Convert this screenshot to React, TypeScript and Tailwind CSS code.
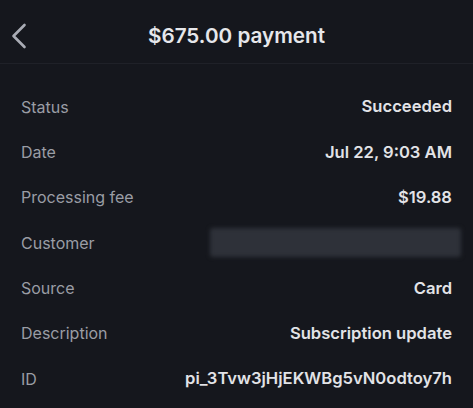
const rows: { label: string; value?: string }[] = [
  { label: 'Status', value: 'Succeeded' },
  { label: 'Date', value: 'Jul 22, 9:03 AM' },
  { label: 'Processing fee', value: '$19.88' },
  { label: 'Customer' },
  { label: 'Source', value: 'Card' },
  { label: 'Description', value: 'Subscription update' },
  { label: 'ID', value: 'pi_3Tvw3jHjEKWBg5vN0odtoy7h' },
]

export default function App() {
  return (
    <div className="w-[473px] h-[408px] overflow-hidden bg-[#15171d] font-['Inter',sans-serif]">
      {/* Header */}
      <div className="relative h-[64px] flex items-center justify-center border-b border-[#1f2128]">
        <button className="absolute left-[10px] top-[22px] w-[20px] h-[28px] flex items-center justify-center">
          <svg viewBox="0 0 20 28" className="w-[20px] h-[28px]" fill="none" stroke="#a9acb5" strokeWidth="2.6" strokeLinecap="round" strokeLinejoin="round">
            <path d="M14.5 3 L3.5 14 L14.5 25" />
          </svg>
        </button>
        <h1 className="text-[20.7px] font-semibold text-[#e6e7eb] mt-[8px]">$675.00 payment</h1>
      </div>

      {/* Details */}
      <div className="pt-[20px] flex flex-col">
        {rows.map((r) => (
          <div key={r.label} className="h-[45.33px] px-[21px] flex items-center justify-between">
            <span className="text-[16px] text-[#9a9da5]">{r.label}</span>
            {r.value ? (
              <span className="text-[16.6px] font-semibold text-[#e2e3e7]">{r.value}</span>
            ) : (
              <div className="w-[251px] h-[29px] -mr-[9px] rounded-[3px] bg-[#2e3139] blur-[2px]" />
            )}
          </div>
        ))}
      </div>
    </div>
  )
}
